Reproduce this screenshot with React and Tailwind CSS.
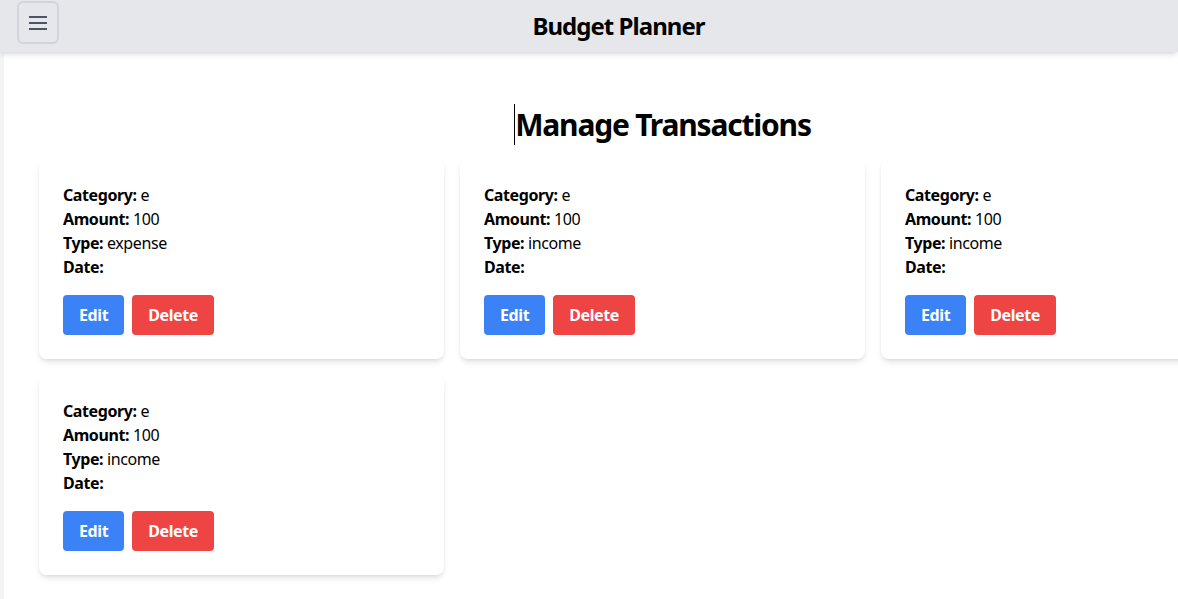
import React from 'react';

const transactions = [
  { id: 1, category: 'e', amount: 100, type: 'expense', date: '' },
  { id: 2, category: 'e', amount: 100, type: 'income', date: '' },
  { id: 3, category: 'e', amount: 100, type: 'income', date: '' },
  { id: 4, category: 'e', amount: 100, type: 'income', date: '' },
];

function MenuIcon() {
  return (
    <svg width="24" height="24" viewBox="0 0 24 24" fill="none" stroke="currentColor" strokeWidth="2">
      <path d="M3 6h18M3 12h18M3 18h18" />
    </svg>
  );
}

function TransactionCard({ t }) {
  return (
    <div className="bg-white rounded-lg shadow-md p-6">
      <p><span className="font-bold">Category:</span> {t.category}</p>
      <p><span className="font-bold">Amount:</span> {t.amount}</p>
      <p><span className="font-bold">Type:</span> {t.type}</p>
      <p><span className="font-bold">Date:</span> {t.date}</p>
      <div className="flex gap-2 mt-4">
        <button className="bg-[#3b82f6] text-white font-bold px-4 py-2 rounded">Edit</button>
        <button className="bg-[#ef4444] text-white font-bold px-4 py-2 rounded">Delete</button>
      </div>
    </div>
  );
}

export default function App() {
  return (
    <div className="min-h-screen bg-[#f3f4f6] text-black overflow-hidden tracking-tight" style={{ fontFamily: '"Noto Sans", sans-serif' }}>
      <header className="relative z-10 h-[52px] bg-[#e5e7eb] shadow-md flex items-center pl-[17px]">
        <button className="w-[42px] h-[43px] mb-[7px] flex items-center justify-center border-2 border-[#d1d5db] rounded-md text-[#4b5563]">
          <MenuIcon />
        </button>
        <h1 className="flex-1 text-center text-2xl font-bold tracking-[-0.04em]">Budget Planner</h1>
      </header>

      <main className="ml-1 bg-white min-h-[547px] pl-[35px] pt-[55px] pb-6">
        <div className="w-[1247px]">
          <h2 className="text-3xl font-bold text-center mb-4 tracking-[-0.04em]">
            <span className="border-l border-black">Manage Transactions</span>
          </h2>
          <div className="grid grid-cols-3 gap-4">
            {transactions.map((t) => (
              <TransactionCard key={t.id} t={t} />
            ))}
          </div>
        </div>
      </main>
    </div>
  );
}
